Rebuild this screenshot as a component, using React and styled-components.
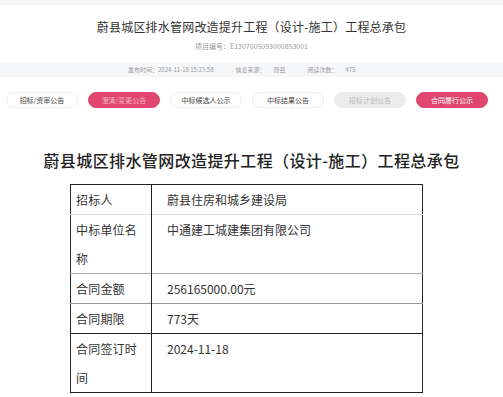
import React from 'react'
import styled, { createGlobalStyle } from 'styled-components';

const GlobalStyle = createGlobalStyle`
  body {
    margin: 0;
    background: #fff;
    font-family: "Noto Sans CJK SC", "Noto Sans", sans-serif;
  }
`;

const Page = styled.div`
  width: 503px;
  padding-top: 5px;
  background: #f6f7f9;
`;

const Header = styled.div`
  background: #fff;
  height: 57px;
  display: flex;
  flex-direction: column;
  align-items: center;
`;

const HeaderTitle = styled.h1`
  margin: 13px 0 0;
  font-size: 12px;
  line-height: 18px;
  font-weight: 400;
  letter-spacing: 0.2px;
  color: #333;
`;

const ProjectNo = styled.div`
  margin-top: 5px;
  font-size: 7px;
  line-height: 10px;
  color: #999;
`;

const MetaBar = styled.div`
  height: 15px;
  display: flex;
  align-items: center;
  padding-left: 128px;
  gap: 22px;
  font-size: 6px;
  color: #999;
`;

const MetaItem = styled.span`
  display: flex;
  gap: ${p => p.$gap || 0}px;
`;

const Body = styled.div`
  background: #fff;
  padding: 15px 0 9px;
`;

const Tabs = styled.div`
  display: flex;
  gap: 10px;
  padding-left: 6px;
`;

const Tab = styled.div`
  width: 72px;
  height: 16px;
  box-sizing: border-box;
  border-radius: 8px;
  display: flex;
  align-items: center;
  justify-content: center;
  font-size: 7px;
  border: 1px solid ${p => (p.$variant === 'pink' || p.$variant === 'pinkFade') ? '#e0456e' : '#ececec'};
  background: ${p => (p.$variant === 'pink' || p.$variant === 'pinkFade') ? '#e0456e' : p.$variant === 'gray' ? '#ececec' : '#fff'};
  color: ${p => p.$variant === 'pink' ? '#fff' : p.$variant === 'pinkFade' ? '#f4b3c3' : p.$variant === 'gray' ? '#b8b8b8' : '#444'};
`;

const Title = styled.h2`
  margin: 42px 0 0;
  text-align: center;
  font-size: 16px;
  line-height: 20px;
  letter-spacing: 0.4px;
  font-weight: 500;
  color: #222;
`;

const Table = styled.table`
  margin: 14px 0 0 70px;
  width: 353px;
  border-collapse: collapse;
  border: 1px solid #222;
  font-size: 12px;
  color: #333;
`;

const Row = styled.tr`
  border-bottom: 1px solid ${p => p.$line || '#222'};
`;

const Label = styled.td`
  width: 67px;
  padding: 0 8px 0 5px;
  line-height: 29px;
  vertical-align: top;
  border-right: 1px solid #222;
  letter-spacing: 0.2px;
`;

const Value = styled.td`
  padding: 0 0 0 15px;
  line-height: 29px;
  vertical-align: top;
`;

const rows = [
  ['招标人', '蔚县住房和城乡建设局', '#dedede'],
  ['中标单位名称', '中通建工城建集团有限公司', '#aaa'],
  ['合同金额', '256165000.00元', '#999'],
  ['合同期限', '773天', '#222'],
  ['合同签订时间', '2024-11-18', '#222'],
];

export default function App() {
  return (
    <>
      <GlobalStyle />
      <Page>
        <Header>
          <HeaderTitle>蔚县城区排水管网改造提升工程（设计-施工）工程总承包</HeaderTitle>
          <ProjectNo>项目编号：E1307005093000853001</ProjectNo>
        </Header>
        <MetaBar>
          <MetaItem>发布时间：2024-11-18 15:23:58</MetaItem>
          <MetaItem $gap={8}><span>信息来源：</span><span>蔚县</span></MetaItem>
          <MetaItem $gap={8}><span>阅读次数：</span><span>475</span></MetaItem>
        </MetaBar>
        <Body>
          <Tabs>
            <Tab>招标/资审公告</Tab>
            <Tab $variant="pinkFade">澄清/变更公告</Tab>
            <Tab>中标候选人公示</Tab>
            <Tab>中标结果公告</Tab>
            <Tab $variant="gray">招标计划公告</Tab>
            <Tab $variant="pink">合同履行公示</Tab>
          </Tabs>
          <Title>蔚县城区排水管网改造提升工程（设计-施工）工程总承包</Title>
          <Table>
            <tbody>
              {rows.map(([label, value, line]) => (
                <Row key={label} $line={line}>
                  <Label>{label}</Label>
                  <Value>{value}</Value>
                </Row>
              ))}
            </tbody>
          </Table>
        </Body>
      </Page>
    </>
  )
}
